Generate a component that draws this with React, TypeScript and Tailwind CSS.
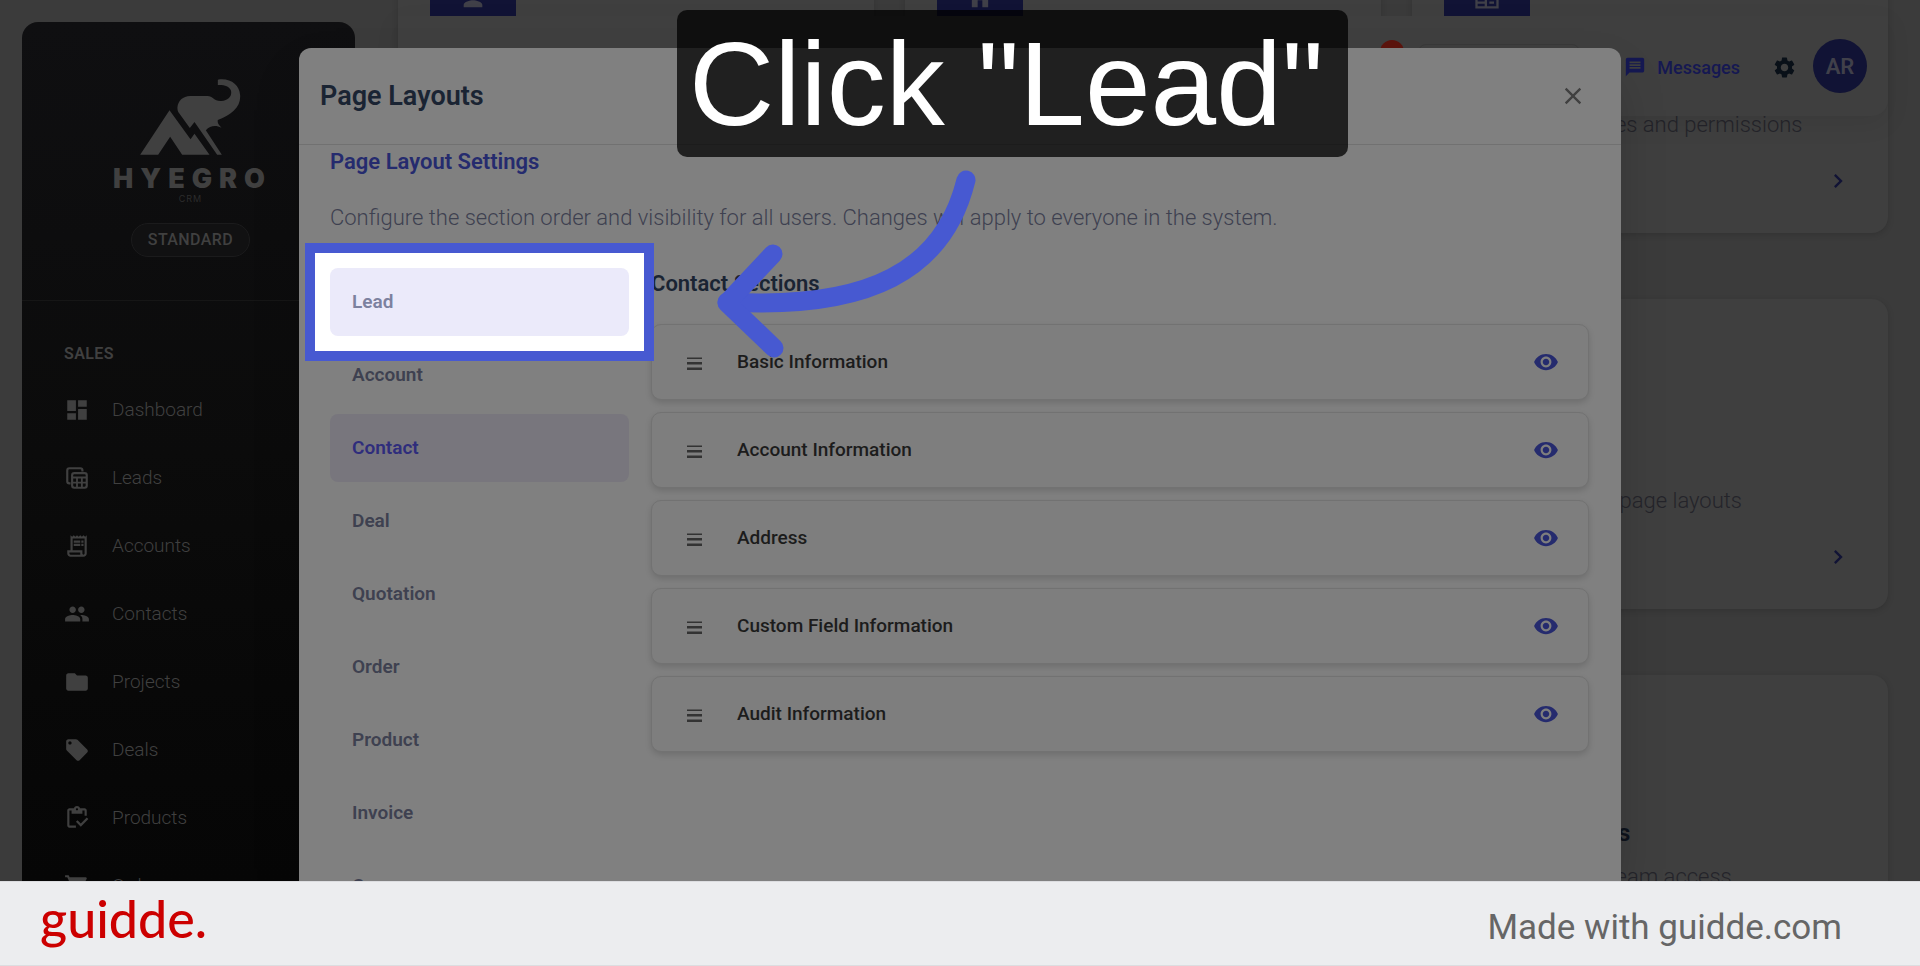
import type { ReactNode } from "react";
import type { IconType } from "react-icons";
import {
  MdChevronRight,
  MdClose,
  MdCorporateFare,
  MdDashboard,
  MdFolder,
  MdHome,
  MdLocalOffer,
  MdMessage,
  MdOutlineInventory,
  MdOutlineReceiptLong,
  MdPeople,
  MdPerson,
  MdSettings,
  MdShoppingCart,
  MdVisibility,
} from "react-icons/md";

type IconProps = { className?: string };

function LeadsIcon({ className }: IconProps) {
  return (
    <svg viewBox="0 0 24 24" className={className} fill="none" stroke="currentColor" strokeWidth="2">
      <path d="M6 17H5A2 2 0 0 1 3 15V5A2 2 0 0 1 5 3H15A2 2 0 0 1 17 5V6" />
      <rect x="7.500" y="7.500" width="13.500" height="13.500" rx="2" />
      <path d="M7.500 11.500H21M7.500 16.200H21M12 11.500V21M16.500 11.500V21" strokeWidth="1.700" />
    </svg>
  );
}

function HyegroMark() {
  return (
    <svg viewBox="424 238 302 228" className="h-[76px] w-[101px]" fill="currentColor" aria-hidden="true">
      <path d="M424 465 512 332 575 419 587 402 632 465H550L514 411 478 465Z" />
      <path d="M536 322C537 305 552 289 574 289H626C642 289 646 306 668 304 690 302 701 287 696 272 691 259 676 255 657 256V240C694 234 722 255 724 287 726 322 698 346 657 361 655 370 660 377 668 384 650 376 634 378 621 392L669 465H655L587 367 573 385 541 341C537 335 535 329 536 322Z" />
    </svg>
  );
}

function DragHandle() {
  return (
    <svg viewBox="0 0 15 14" className="mt-1 h-[14px] w-[15px] text-[#333333]" fill="currentColor" aria-hidden="true">
      <path d="M0 .5H15V2H0ZM0 5H15V7.600H0ZM0 10.400H15V13H0Z" />
    </svg>
  );
}

const sidebarItems: { label: string; icon: IconType | typeof LeadsIcon }[] = [
  { label: "Dashboard", icon: MdDashboard },
  { label: "Leads", icon: LeadsIcon },
  { label: "Accounts", icon: MdOutlineReceiptLong },
  { label: "Contacts", icon: MdPeople },
  { label: "Projects", icon: MdFolder },
  { label: "Deals", icon: MdLocalOffer },
  { label: "Products", icon: MdOutlineInventory },
  { label: "Orders", icon: MdShoppingCart },
];

const modules = ["Lead", "Account", "Contact", "Deal", "Quotation", "Order", "Product", "Invoice", "Case"];

const sections = [
  "Basic Information",
  "Account Information",
  "Address",
  "Custom Field Information",
  "Audit Information",
];

const settingCards: { title: string; text: string; icon?: IconType }[] = [
  { title: "Profile", text: "Manage your profile", icon: MdPerson },
  { title: "Company", text: "Manage company details", icon: MdHome },
  { title: "Users & Roles", text: "Manage users, roles and permissions", icon: MdCorporateFare },
  { title: "Currency", text: "Manage currencies" },
  { title: "Templates", text: "Manage email templates" },
  { title: "Page Layouts", text: "Customize record page layouts" },
  { title: "Automation", text: "Set up workflow rules" },
  { title: "Integrations", text: "Connect other services" },
  { title: "Teams and Users", text: "Assign roles and team access" },
];

function Sidebar() {
  return (
    <aside className="mt-[22px] ml-[22px] flex w-[333px] shrink-0 flex-col rounded-t-2xl bg-linear-to-b from-[#0f0f11] via-[#0b0b0b] to-[#060606]">
      <div className="flex flex-col items-center border-b border-[#161616] pt-[57px] pb-[43px] pl-1">
        <div className="flex flex-col items-center text-[#404040]">
          <HyegroMark />
          <p className="mt-2 pl-1 font-[Inter] text-[27px] leading-8 font-black tracking-[7px]">HYEGRO</p>
          <p className="-mt-[2px] font-[Inter] text-[9px] leading-3 tracking-[1px] text-[#2c2c2c]">CRM</p>
        </div>
        <span className="mt-[18px] rounded-full border border-[#1b1b1c] bg-[#111112] px-4 text-base leading-8 font-medium tracking-wide text-[#404040]">
          STANDARD
        </span>
      </div>
      <h2 className="px-[42px] pt-[41px] text-base leading-6 font-semibold tracking-wide text-[#404040]">SALES</h2>
      <nav className="flex flex-col pt-[10px]">
        {sidebarItems.map(({ label, icon: Icon }) => (
          <a key={label} href="#" className="flex h-[68px] items-center gap-[22px] px-[42px] text-[19px] font-light text-[#404040]">
            <Icon className="size-[26px]" />
            {label}
          </a>
        ))}
      </nav>
    </aside>
  );
}

function TopBar() {
  return (
    <header className="relative z-10 flex h-[100px] shrink-0 items-center justify-end rounded-b-2xl bg-[#3f3f3f] pr-[21px] shadow-[0_8px_24px_rgba(0,0,0,0.08)]">
      <span className="mb-7 size-6 rounded-full bg-[#5c140d]" />
      <button className="ml-[14px] h-11 w-[162px] rounded-lg border border-[#393939]" aria-label="Quick create" />
      <button className="ml-11 flex items-center gap-[11px] pt-[2px] text-[18px] font-medium text-[#151852]">
        <MdMessage className="size-[22px]" />
        Messages
      </button>
      <button className="ml-8 pt-[2px] text-[#091018]" aria-label="Settings">
        <MdSettings className="size-[25px]" />
      </button>
      <button className="ml-4 size-[54px] rounded-full bg-[#111335] text-[22px] font-semibold text-[#40404a]">AR</button>
    </header>
  );
}

function SettingsGrid() {
  return (
    <div className="-mt-[193px] grid grid-cols-3 gap-x-[31px] gap-y-[66px]">
      {settingCards.map(({ title, text, icon: Icon }) => (
        <article key={title} className="flex h-[310px] flex-col rounded-2xl bg-[#3f3f3f] p-8 shadow-[0_2px_6px_rgba(0,0,0,0.15)]">
          <div className="flex size-[86px] shrink-0 items-center justify-center bg-[#111335] text-[#404048]">
            {Icon && <Icon className="size-7" />}
          </div>
          <h3 className="mt-6 text-[24px] leading-8 font-semibold whitespace-nowrap text-[#0d131c]">{title}</h3>
          <p className="mt-3 text-[22px] leading-8 font-light whitespace-nowrap text-[#24242a]">{text}</p>
          <a href="#" className="mt-[26px] mr-1 self-end text-[#111335]" aria-label={`Open ${title}`}>
            <MdChevronRight className="size-7" />
          </a>
        </article>
      ))}
    </div>
  );
}

function ModuleButton({ label }: { label: string }) {
  if (label === "Lead") {
    return (
      <button className="relative z-10 flex h-[68px] items-center px-[22px] text-left">
        {/* spotlight around the step's target */}
        <span className="absolute -inset-[25px] border-[10px] border-[#4759d1] bg-white p-[15px]">
          <span className="block h-full rounded-lg bg-[#ebeafa]" />
        </span>
        <span className="relative text-[#7c819f]">{label}</span>
      </button>
    );
  }
  return (
    <button
      className={
        label === "Contact"
          ? "flex h-[68px] items-center rounded-lg bg-[#78767d] px-[22px] text-left text-[#2f2d7c]"
          : "flex h-[68px] items-center rounded-lg px-[22px] text-left text-[#3e4150]"
      }
    >
      {label}
    </button>
  );
}

function PageLayoutsDialog() {
  return (
    <div role="dialog" aria-label="Page Layouts" className="flex h-full w-full max-w-[1322px] flex-col overflow-hidden rounded-t-xl bg-[#808080] shadow-2xl">
      <div className="flex h-[97px] shrink-0 items-center justify-between border-b border-[#717171] px-[21px]">
        <h1 className="text-[27px] leading-8 font-semibold text-[#1a2433]">Page Layouts</h1>
        <button className="pr-[13px] text-[#404040]" aria-label="Close">
          <MdClose className="size-[28px]" />
        </button>
      </div>
      <div className="pr-8 pl-[31px]">
        <h2 className="pt-px text-[22px] leading-8 font-semibold text-[#252b6e]">Page Layout Settings</h2>
        <p className="mt-6 text-[22px] leading-8 font-light text-[#3e4150]">
          Configure the section order and visibility for all users. Changes will apply to everyone in the system.
        </p>
        <div className="flex gap-[22px] pt-[34px]">
          <nav className="flex w-[299px] shrink-0 flex-col gap-[5px] text-[19px] font-semibold">
            {modules.map((label) => (
              <ModuleButton key={label} label={label} />
            ))}
          </nav>
          <div className="flex-1">
            <h3 className="text-[22px] leading-8 font-semibold text-[#1a2433]">Contact Sections</h3>
            <ul className="mt-6 flex flex-col gap-3">
              {sections.map((name) => (
                <li key={name} className="flex h-[76px] items-center rounded-[10px] border border-[#727272] bg-[#7e7e7e] pr-[29px] pl-[35px] shadow-[0_3px_6px_rgba(0,0,0,0.14)]">
                  <DragHandle />
                  <span className="ml-[35px] text-[19px] font-medium text-[#1c1c1c]">{name}</span>
                  <button className="ml-auto text-[#252b6e]" aria-label={`Toggle ${name}`}>
                    <MdVisibility className="size-[26px]" />
                  </button>
                </li>
              ))}
            </ul>
          </div>
        </div>
      </div>
    </div>
  );
}

function Callout({ children }: { children: ReactNode }) {
  return (
    <div className="absolute top-[10px] left-[677px] z-30 flex h-[147px] w-[671px] items-center rounded-[10px] bg-black/75 px-3">
      <p className="font-['Liberation_Sans',sans-serif] text-[118px] leading-none whitespace-nowrap text-white">{children}</p>
    </div>
  );
}

function Arrow() {
  return (
    <svg
      viewBox="700 160 290 210"
      className="absolute top-[160px] left-[700px] z-30 h-[210px] w-[290px]"
      fill="none"
      stroke="#4759d1"
      strokeWidth="19"
      strokeLinecap="round"
      strokeLinejoin="round"
      aria-hidden="true"
    >
      <path d="M966 180C944 270 870 310 727 302" />
      <path d="M773 254 727 303 774 348" />
    </svg>
  );
}

export default function App() {
  return (
    <div className="flex h-screen flex-col overflow-hidden bg-[#3b3b3b] font-[Roboto,sans-serif]">
      <div className="relative min-h-0 flex-1 overflow-hidden">
        <div className="flex h-full">
          <Sidebar />
          <main className="ml-[43px] flex min-w-0 flex-1 flex-col pt-4 pr-8">
            <TopBar />
            <SettingsGrid />
          </main>
        </div>
        <div className="absolute inset-0 z-20 flex justify-center pt-12">
          <PageLayoutsDialog />
        </div>
        <Callout>Click "Lead"</Callout>
        <Arrow />
      </div>
      <footer className="flex h-[85px] shrink-0 items-center justify-between border-y border-[#dcdde0] bg-[#ecedef] pr-[78px] pl-10">
        <a href="#" className="pb-3 font-[Lato] text-[52px] leading-none font-medium text-[#cc0000]">
          guidde.
        </a>
        <p className="pt-2 text-[35px] leading-10 text-[#666666]">Made with guidde.com</p>
      </footer>
    </div>
  );
}
